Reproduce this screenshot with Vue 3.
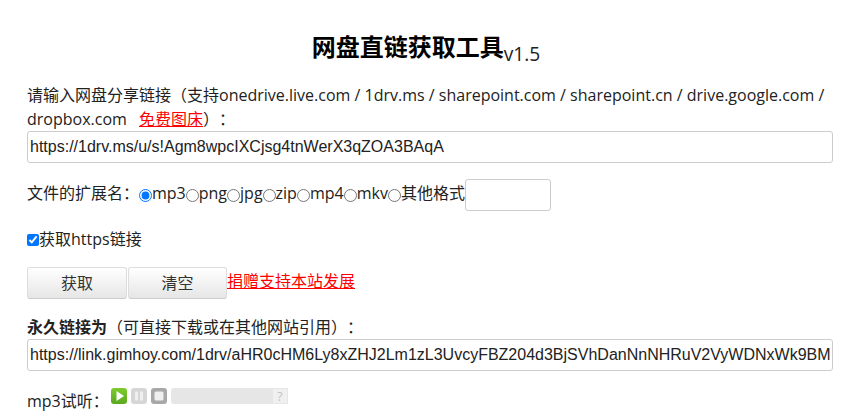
<script setup>
const formats = ['mp3', 'png', 'jpg', 'zip', 'mp4', 'mkv']
</script>

<template>
  <div class="page">
    <h1 class="title">网盘直链获取工具<sub class="ver">v1.5</sub></h1>

    <label class="block intro">
      请输入网盘分享链接（支持onedrive.live.com / 1drv.ms / sharepoint.com / sharepoint.cn / drive.google.com / dropbox.com
      <a class="red free" href="#">免费图床</a>）：
    </label>
    <input class="url" type="text" value="https://1drv.ms/u/s!Agm8wpcIXCjsg4tnWerX3qZOA3BAqA" />

    <div class="formats">
      <span class="lbl">文件的扩展名：</span>
      <template v-for="(f, i) in formats" :key="f">
        <input class="radio" type="radio" name="ext" :checked="i === 0" /><span class="lbl">{{ f }}</span>
      </template>
      <input class="radio" type="radio" name="ext" /><span class="lbl">其他格式</span>
      <input class="other" type="text" />
    </div>

    <label class="https"><input class="check" type="checkbox" checked /><span class="lbl">获取https链接</span></label>

    <div class="actions">
      <button class="btn" type="button">获取</button>
      <button class="btn" type="button">清空</button>
      <a class="red donate" href="#">捐赠支持本站发展</a>
    </div>

    <div class="block result"><b>永久链接为</b>（可直接下载或在其他网站引用）：</div>
    <input class="url" type="text" value="https://link.gimhoy.com/1drv/aHR0cHM6Ly8xZHJ2Lm1zL3UvcyFBZ204d3BjSVhDanNnNHRuV2VyWDNxWk9BM0JBcUE" />

    <div class="player">
      <span>mp3试听：</span>
      <div class="controls">
        <svg class="ctl" viewBox="0 0 16 16" width="16" height="16">
          <defs>
            <linearGradient id="playFill" x1="0" y1="0" x2="0" y2="1">
              <stop offset="0" stop-color="#7ecb2f" />
              <stop offset="1" stop-color="#5aa81e" />
            </linearGradient>
          </defs>
          <rect width="16" height="16" rx="3" fill="url(#playFill)" />
          <path d="M5.5 3 L13 8 L5.5 13 Z" fill="#fff" />
        </svg>
        <svg class="ctl" viewBox="0 0 16 16" width="16" height="16">
          <rect width="16" height="16" rx="3" fill="#d6d6d6" />
          <rect x="4" y="3.5" width="3" height="9" rx="1.2" fill="#f0f0f0" />
          <rect x="9" y="3.5" width="3" height="9" rx="1.2" fill="#f0f0f0" />
        </svg>
        <svg class="ctl" viewBox="0 0 16 16" width="16" height="16">
          <rect width="16" height="16" rx="3" fill="#a8a8a8" />
          <rect x="3.5" y="3.5" width="9" height="9" rx="1.5" fill="#f0f0f0" />
        </svg>
        <div class="track"><span class="help">?</span></div>
      </div>
    </div>
  </div>
</template>

<style>
html, body { margin: 0; background: #fff; }
</style>

<style scoped>
.page {
  box-sizing: border-box;
  width: 851px;
  height: 418px;
  overflow: hidden;
  padding: 0 18px 0 27px;
  font-family: "Open Sans", "Noto Sans CJK SC", sans-serif;
  font-size: 16px;
  line-height: 24px;
  color: #222;
  text-spacing-trim: space-all;
}
.title {
  margin: 0;
  padding: 30px 8px 0 0;
  height: 53px;
  text-align: center;
  font-size: 24px;
  line-height: 33px;
  font-weight: 700;
  color: #000;
}
.ver {
  font-size: 19.2px;
  font-weight: 400;
  line-height: 0;
  vertical-align: -5px;
  color: #222;
}
.block { display: block; }
.red { color: #f00; text-decoration: underline; }
.free { margin-left: 8px; }
.url {
  display: block;
  box-sizing: border-box;
  width: 806px;
  height: 32px;
  padding: 0 2px;
  border: 1px solid #ccc;
  border-radius: 3px;
  font-family: "Liberation Sans", Arial, sans-serif;
  font-size: 16px;
  color: #222;
  background: #fff;
}
.formats {
  display: flex;
  align-items: center;
  margin-top: 16px;
  height: 32px;
}
.lbl { position: relative; top: -2px; }
.radio { width: 13px; height: 13px; margin: 0; flex: none; }
.other {
  box-sizing: border-box;
  width: 86px;
  height: 32px;
  border: 1px solid #ccc;
  border-radius: 3px;
  background: #fff;
}
.https {
  display: flex;
  align-items: center;
  margin-top: 17px;
}
.check { width: 12px; height: 12px; margin: 0; }
.https .lbl { top: -1px; }
.actions {
  display: flex;
  align-items: center;
  margin-top: 15px;
}
.btn {
  width: 100px;
  height: 32px;
  padding: 0;
  border: 1px solid #ddd;
  border-bottom-color: #ccc;
  border-radius: 3px;
  background: linear-gradient(#fff, #e6e6e6);
  font: inherit;
  color: #333;
}
.btn + .btn { width: 99px; margin-left: 1px; }
.donate { position: relative; top: -2px; }
.result { margin-top: 16px; }
.player {
  display: flex;
  margin-top: 18px;
}
.controls {
  display: flex;
  gap: 4px;
  margin-left: 2px;
  margin-top: -1px;
  height: 16px;
}
.ctl { display: block; }
.track {
  position: relative;
  width: 117px;
  height: 16px;
  background: #e6e6e6;
  border-radius: 3px 0 0 3px;
}
.help {
  position: absolute;
  right: 1px;
  top: 1px;
  width: 14px;
  height: 14px;
  background: #f0f0f0;
  color: #c4c4c4;
  font-size: 13px;
  line-height: 14px;
  text-align: center;
}
</style>
